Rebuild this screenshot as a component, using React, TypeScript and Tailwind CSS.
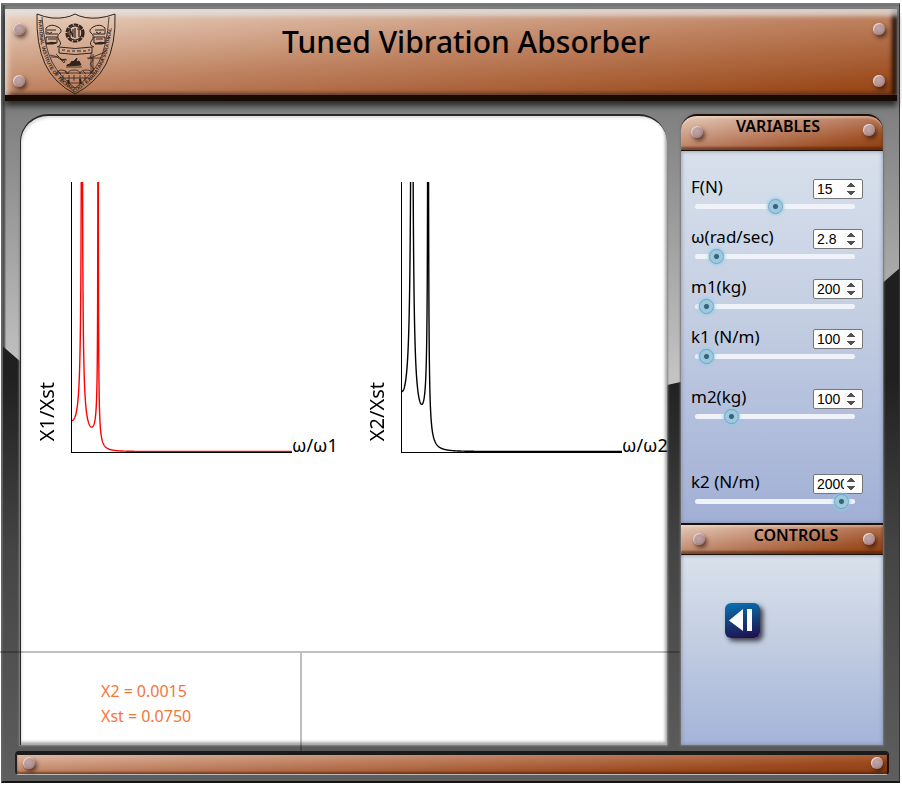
import { useState } from "react";

type Variable = {
  id: string;
  label: string;
  min: number;
  max: number;
  step: number;
  initial: number;
  spacing: string;
};

const variables: Variable[] = [
  { id: "force", label: "F(N)", min: 1, max: 29, step: 1, initial: 15, spacing: "" },
  { id: "omega", label: "ω(rad/sec)", min: 0, max: 30, step: 0.1, initial: 2.8, spacing: "mt-4" },
  { id: "m1", label: "m1(kg)", min: 180, max: 1000, step: 1, initial: 200, spacing: "mt-4" },
  { id: "k1", label: "k1 (N/m)", min: 80, max: 900, step: 1, initial: 100, spacing: "mt-4" },
  { id: "m2", label: "m2(kg)", min: 0, max: 500, step: 1, initial: 100, spacing: "mt-[26px]" },
  { id: "k2", label: "k2 (N/m)", min: 0, max: 2080, step: 1, initial: 2000, spacing: "mt-[51px]" },
];

const PLOT_W = 220;
const PLOT_H = 270;

// Magnitude of a two-degree-of-freedom response with resonances at r1 and r2.
function responsePoints(staticHeight: number) {
  const r1 = 9.9;
  const r2 = 26.1;
  const points: string[] = [];
  for (let x = 0; x <= PLOT_W; x += 0.2) {
    const d = (1 - (x * x) / (r1 * r1)) * (1 - (x * x) / (r2 * r2));
    const h = Math.min(Math.abs(staticHeight / (d || 0.0001)), 900);
    points.push(`${x.toFixed(1)},${(PLOT_H - 0.5 - h).toFixed(2)}`);
  }
  return points.join(" ");
}

function Plot({ yLabel, xLabel, color, height }: { yLabel: string; xLabel: string; color: string; height: number }) {
  return (
    <div className="flex w-[330px] shrink-0 items-end">
      <div className="mr-3 mb-3 w-6 rotate-180 text-xl leading-6 [writing-mode:vertical-rl]">{yLabel}</div>
      <svg width={PLOT_W} height={PLOT_H} className="box-content shrink-0 overflow-hidden border-b border-l border-black">
        <polyline points={responsePoints(height)} fill="none" stroke={color} strokeWidth="1.4" />
      </svg>
      <div className="-mb-1 text-lg leading-6">{xLabel}</div>
    </div>
  );
}

function Rivet({ place }: { place: string }) {
  return (
    <span
      className={`absolute size-3 rounded-full bg-[radial-gradient(circle_at_45%_40%,#c2a5a5_0%,#b39494_50%,#7d6262_100%)] shadow-[inset_1px_1px_1px_#e6d8d8,2px_3px_4px_rgba(50,20,10,0.7)] ${place}`}
    />
  );
}

function Crest() {
  return (
    <svg viewBox="0 0 80 82" className="h-[82px] w-20 shrink-0 self-end" fill="none" stroke="#30221c" strokeWidth="1">
      <path d="M1 1Q8 4 16 5Q30 6 39 1Q48 6 62 5Q71 4 79 1Q80 31 70 51Q60 70 39 81Q18 70 9 51Q0 31 1 1Z" />
      <path d="M6 4Q8 33 16 49Q24 64 39 75Q54 64 63 49Q71 33 73 4" strokeWidth="0.8" />
      <path id="crest-band" d="M2.5 7Q3 32 11 50Q20 69 39 79Q58 69 67 50Q75 32 76 7" stroke="none" />
      <text fontSize="5" fontFamily="Liberation Sans, sans-serif" fontWeight="700" fill="#30221c" stroke="none">
        <textPath href="#crest-band">NATIONAL INSTITUTE OF TECHNOLOGY KARNATAKA SURATHKAL</textPath>
      </text>
      <circle cx="39" cy="20" r="8.5" strokeWidth="2.2" strokeDasharray="4.5 1" />
      <circle cx="39" cy="20" r="7" strokeWidth="1.2" />
      <path d="M34 16v8M34 16l3 8v-8M39 15v10M41 16h4M43 16v8M46 17v6" strokeWidth="1.2" />
      <path d="M10 15q5-5 12-1q5 3 2 6q-4 3-1 7q4 5-2 7M10 15v6h12M11 17h9M10 24h11v6H10zM12 26h8M11 19q3 3 5 0" />
      <path d="M69 15q-5-5-12-1q-5 3-2 6q4 3 1 7q-4 5 2 7M69 15v6H57M59 17h9M58 24h11v6H58zM60 26h7M60 19q3 3 5 0" />
      <path d="M10 31q6-3 10-1l-3 1zM59 31q6-3 10-1l-3 1z" fill="#30221c" />
      <path d="M23 34q16 3 33 0v6q-17 3-33 0zM26 37h3M31 38h3M36 38h3M41 38h4M47 38h3M52 37h2" />
      <path d="M14 42q7 1 10 4l7 1M20 41l6 6l4-1M15 44h8M24 46l5 2l-1 2z" strokeWidth="0.8" />
      <path d="M31 53l14-1l-2-4l-3 1l1-4l-4 4l-1-1l-2 3l-3 1z" fill="#30221c" />
      <path d="M30 54h16M51 45h16M52 46l17-7M55 40v20M54 43l3 4l-3 4l4 5l-4 4M57 41v18" strokeWidth="0.8" />
      <path d="M21 61q0-4 5-4t6 4q0-4 6-4t6 4q0-4 6-4t6 4M20 60h39M24 65h30M27 62v7M33 62v8M38 62v6M44 62v9M49 62v6M30 70h17M22 58l3 3M29 58l2 3M47 58l3 3" strokeWidth="0.8" />
      <path d="M32 67l1 4M44 66l1 5" strokeWidth="2" />
    </svg>
  );
}

function SectionTitle({ children, top }: { children: string; top?: boolean }) {
  return (
    <div
      className={`relative flex justify-center border-[#1c100b] bg-[linear-gradient(170deg,#e5cbb9_0%,#be8468_45%,#a05228_78%,#8f3d10_100%)] shadow-[inset_0_2px_2px_rgba(255,240,230,0.35),inset_-1px_-3px_2px_rgba(60,20,0,0.5)] ${
        top ? "h-[37px] rounded-t-2xl border-t-2 border-b" : "h-8 border-t-2 border-b"
      }`}
    >
      <Rivet place={top ? "left-2.5 top-2.5" : "left-3 top-2"} />
      <h2 className={`text-base leading-5 font-semibold ${top ? "pr-2" : "pl-7"}`}>{children}</h2>
      <Rivet place="right-2 top-2" />
    </div>
  );
}

function VariableRow({ variable }: { variable: Variable }) {
  const [value, setValue] = useState(variable.initial);
  const { id, label, min, max, step, spacing } = variable;
  return (
    <div className={spacing}>
      <div className="flex h-5 items-center justify-between pr-5 pl-2.5">
        <label htmlFor={id} className="pb-1 text-[17px] leading-5">
          {label}
        </label>
        <input
          id={id}
          type="number"
          min={min}
          max={max}
          step={step}
          value={value}
          onChange={(e) => setValue(Number(e.target.value))}
          className="h-5 w-[50px] rounded-[2px] border border-[#767676] bg-white pl-[3px] pr-[3px] font-['Liberation_Sans',sans-serif] text-sm leading-4 [&::-webkit-inner-spin-button]:opacity-100 [&::-webkit-inner-spin-button]:brightness-75 [&::-webkit-inner-spin-button]:contrast-200"
        />
      </div>
      <input
        type="range"
        aria-label={label}
        min={min}
        max={max}
        step={step}
        value={value}
        onChange={(e) => setValue(Number(e.target.value))}
        className="relative ml-3.5 block h-3.5 w-40 appearance-none bg-transparent [&::-webkit-slider-runnable-track]:h-[5px] [&::-webkit-slider-runnable-track]:rounded-sm [&::-webkit-slider-runnable-track]:bg-[#eff3f9] [&::-webkit-slider-thumb]:-mt-[5px] [&::-webkit-slider-thumb]:size-[15px] [&::-webkit-slider-thumb]:appearance-none [&::-webkit-slider-thumb]:rounded-full [&::-webkit-slider-thumb]:border [&::-webkit-slider-thumb]:border-[#6fa2bd] [&::-webkit-slider-thumb]:bg-[radial-gradient(circle,#35637c_0,#35637c_2px,#9ac6dc_3px,#a9d0e3_100%)] [&::-webkit-slider-thumb]:shadow-[0_0_3px_1px_#8fcdea]"
      />
    </div>
  );
}

export default function App() {
  return (
    <div className="bg-white pt-[3px] pr-0.5 pb-1 pl-px font-['Comic_Sans_MS','Noto_Sans',sans-serif] text-black">
      <div className="relative isolate border-t-2 border-b-2 border-r border-l-2 border-t-[#76787a] border-r-[#333] border-b-[#151515] border-l-[#606362] bg-[linear-gradient(#808080_0%,#808080_14%,#c4c4c4_48%,#c4c4c4_100%)] px-0.5 pt-1 shadow-[inset_2px_0_2px_#4a4a4a]">
        <div className="absolute inset-0 -z-10 bg-[linear-gradient(#1e1e1e_0%,#202020_48%,#444_70%,#5e5e5e_100%)] [clip-path:polygon(0_44%,2%_46%,74%_49%,76%_48.5%,98%_36%,100%_34%,100%_100%,0_100%)]" />
        <header className="relative flex h-[92px] items-center border-b-[6px] border-[#170802] bg-[linear-gradient(175deg,#ecd6c5_0%,#bd805e_52%,#94400f_100%)] pl-[31px] shadow-[inset_0_8px_4px_-1px_rgba(225,225,225,0.75),inset_6px_0_5px_-2px_rgba(235,220,210,0.65),inset_-6px_-2px_4px_-1px_#241006,0_5px_6px_rgba(20,20,20,0.8)]">
          <Rivet place="left-2 top-3.5" />
          <Rivet place="left-2 top-[66px]" />
          <Crest />
          <h1 className="flex-1 pr-[81px] pb-5 text-center text-3xl leading-10 font-medium">Tuned Vibration Absorber</h1>
          <Rivet place="right-3 top-3.5" />
          <Rivet place="right-3 top-[66px]" />
        </header>

        <div className="mt-[13px] flex gap-[14px] pr-3.5 pl-[15px]">
          <main className="flex min-w-0 flex-1 flex-col rounded-t-[28px] border-t-2 border-l border-[#292929] bg-white shadow-[0_0_2px_1px_#888,inset_-3px_-4px_3px_-1px_#aaa,inset_2px_3px_3px_-1px_#ddd]">
            <div className="flex h-[535px] pt-[66px] pl-3.5">
              <div className="flex items-start">
                <Plot yLabel="X1/Xst" xLabel="ω/ω1" color="#ff0000" height={31} />
                <Plot yLabel="X2/Xst" xLabel="ω/ω2" color="#000000" height={60} />
              </div>
            </div>
            <div className="-mr-[15px] -mb-[7px] -ml-[21px] flex border-t-2 border-black/25">
              <dl className="h-[99px] w-[302px] border-r-2 border-black/25 pt-[26px] pl-[101px] text-base leading-[25px] text-[#f4763a]">
                <div className="flex gap-1">
                  <dt>X2 =</dt>
                  <dd>0.0015</dd>
                </div>
                <div className="flex gap-1">
                  <dt>Xst =</dt>
                  <dd>0.0750</dd>
                </div>
              </dl>
            </div>
          </main>

          <aside className="relative flex w-[202px] shrink-0 flex-col self-stretch rounded-t-2xl shadow-[0_0_2px_1px_#777]">
            <SectionTitle top>VARIABLES</SectionTitle>
            <section className="bg-[linear-gradient(#d7e0eb,#c3cee2_45%,#a1afd6)] pt-7 pb-[15px] shadow-[inset_0_0_4px_#7d89a0]">
              {variables.map((v) => (
                <VariableRow key={v.id} variable={v} />
              ))}
            </section>
            <SectionTitle>CONTROLS</SectionTitle>
            <section className="flex-1 bg-[linear-gradient(#d9e1eb,#c3cee2_45%,#a4b3d9)] pt-12 pl-[44px] shadow-[inset_0_0_4px_#7d89a0]">
              <button
                type="button"
                aria-label="Step back"
                className="block size-[35px] rounded-md bg-[linear-gradient(170deg,#0873b7,#134079_50%,#210b4d)] shadow-[3px_3px_5px_rgba(20,20,30,0.8)]"
              >
                <svg viewBox="0 0 35 35" className="size-full" fill="#fff">
                  <path d="M4 17.5L18 6v22zM22 6h5v22h-5z" />
                </svg>
              </button>
            </section>
          </aside>
        </div>

        <footer className="relative mt-1.5 mr-2 mb-1.5 ml-2.5 h-6 rounded-sm border-t-4 border-r-2 border-b border-l-2 border-t-[#1b1b1b] border-r-[#211007] border-b-[#bbb] border-l-[#222] bg-[linear-gradient(178deg,#dfb9a3_0%,#bd7e5e_38%,#9c4a1e_75%,#8d3c13_100%)] shadow-[inset_0_-2px_2px_rgba(60,20,0,0.5)]">
          <Rivet place="left-1.5 top-0.5" />
          <Rivet place="right-1 top-0.5" />
        </footer>
      </div>
    </div>
  );
}
